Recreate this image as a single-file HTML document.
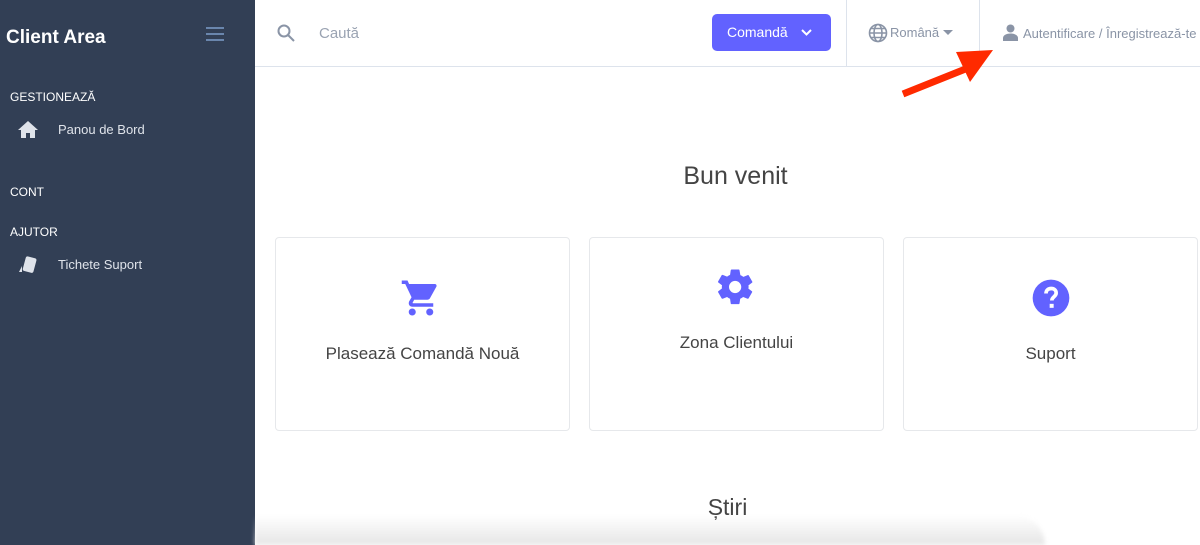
<!DOCTYPE html>
<html><head><meta charset="utf-8"><style>
*{box-sizing:border-box;margin:0;padding:0}
body{width:1200px;height:545px;overflow:hidden;font-family:"Liberation Sans",sans-serif;background:#fff;position:relative}
.sb{position:absolute;left:0;top:0;width:255px;height:545px;background:#323f55;color:#fff}
.sb h1{position:absolute;left:6px;top:27px;font-size:19px;font-weight:bold}
.ham{position:absolute;left:206px;top:27px;width:18px}
.ham i{display:block;height:2px;background:#6a86ad;margin-bottom:4px}
.sec{position:absolute;left:10px;font-size:12px;color:#fff}
.it{position:absolute;left:58px;font-size:13px;color:#dfe3ea}
.hd{position:absolute;left:255px;top:0;right:0;height:67px;border-bottom:1px solid #dde3ec}
.abs{position:absolute}
.card{position:absolute;top:237px;width:295px;height:194px;border:1px solid #e6e8eb;border-radius:4px;text-align:center;font-size:17px;color:#444}
</style></head><body>
<div class="sb">
<h1>Client Area</h1>
<div class="ham"><i></i><i></i><i></i></div>
<div class="sec" style="top:90px">GESTIONEAZĂ</div>
<svg class="abs" style="left:18px;top:121px" width="20" height="17" viewBox="0 0 20 17"><path d="M10 0L0 9h3v8h5v-5h4v5h5V9h3z" fill="#dfe3ea"/></svg>
<div class="it" style="top:122px">Panou de Bord</div>
<div class="sec" style="top:185px">CONT</div>
<div class="sec" style="top:225px">AJUTOR</div>
<svg class="abs" style="left:17px;top:256px" width="22" height="18" viewBox="0 0 22 18"><rect x="7" y="1" width="11" height="15" rx="2" transform="rotate(15 12 9)" fill="#dfe3ea"/><path d="M2 16l3-6v6z" fill="#dfe3ea"/></svg>
<div class="it" style="top:257px">Tichete Suport</div>
</div>
<div class="hd">
<svg class="abs" style="left:22px;top:24px" width="18" height="18" viewBox="0 0 18 18"><circle cx="7" cy="7" r="5.5" stroke="#8a94a6" stroke-width="2" fill="none"/><path d="M11 11l6 6" stroke="#8a94a6" stroke-width="2"/></svg>
<div class="abs" style="left:64px;top:25px;font-size:15px;color:#9aa3b2">Caută</div>
<div class="abs" style="left:457px;top:14px;width:119px;height:37px;background:#6262ff;border-radius:5px;color:#fff;font-size:14px;padding:10px 0 0 15px">Comandă<svg class="abs" style="left:89px;top:15px" width="11" height="7" viewBox="0 0 11 7"><path d="M1 1l4.5 4.5L10 1" stroke="#fff" stroke-width="2" fill="none"/></svg></div>
<div class="abs" style="left:591px;top:0;width:1px;height:66px;background:#dde3ec"></div>
<svg class="abs" style="left:613px;top:23px" width="20" height="20" viewBox="0 0 20 20" fill="none" stroke="#8a94a6" stroke-width="1.6"><circle cx="10" cy="10" r="8.5"/><ellipse cx="10" cy="10" rx="4" ry="8.5"/><path d="M1.5 10h17M3 5.5h14M3 14.5h14"/></svg>
<div class="abs" style="left:635px;top:25px;font-size:13px;color:#8a94a6">Română</div>
<svg class="abs" style="left:688px;top:30px" width="10" height="6"><path d="M0 0h10L5 5z" fill="#8a94a6"/></svg>
<div class="abs" style="left:724px;top:0;width:1px;height:66px;background:#dde3ec"></div>
<svg class="abs" style="left:748px;top:24px" width="15" height="17" viewBox="0 0 15 17"><circle cx="7.5" cy="4.5" r="4" fill="#8a94a6"/><path d="M0 17v-3c0-3 4-4.5 7.5-4.5S15 11 15 14v3z" fill="#8a94a6"/></svg>
<div class="abs" style="left:768px;top:26px;font-size:13px;color:#8a94a6;white-space:nowrap">Autentificare / Înregistrează-te</div>
</div>
<svg class="abs" style="left:898px;top:48px" width="100" height="50" viewBox="0 0 100 50"><path d="M5 46L70 20" stroke="#ff2a00" stroke-width="7"/><path d="M95 2L58 4l14 30z" fill="#ff2a00"/></svg>
<div class="abs" style="left:263px;width:945px;top:162px;text-align:center;font-size:25px;color:#444">Bun venit</div>
<div class="card" style="left:275px"><svg class="abs" style="left:124px;top:39px" width="42" height="42" viewBox="0 0 24 24"><path d="M7 18c-1.1 0-2 .9-2 2s.9 2 2 2 2-.9 2-2-.9-2-2-2zM1 2v2h2l3.6 7.6-1.4 2.4c-.1.3-.2.6-.2 1 0 1.1.9 2 2 2h12v-2H7.4c-.1 0-.2-.1-.2-.2v-.1l.9-1.7h7.4c.8 0 1.4-.4 1.700-1l3.6-6.5c.1-.2.1-.3.1-.5 0-.6-.4-1-1-1H5.2l-.9-2zM17 18c-1.1 0-2 .9-2 2s.9 2 2 2 2-.9 2-2-.9-2-2-2z" fill="#6262ff"/></svg><div style="margin-top:106px">Plasează Comandă Nouă</div></div>
<div class="card" style="left:589px"><svg class="abs" style="left:125px;top:28px" width="42" height="42" viewBox="0 0 24 24"><path d="M19.1 12.9c0-.3.1-.6.1-.9s0-.6-.1-.9l2.1-1.6c.2-.2.2-.4.1-.6l-2-3.5c-.1-.2-.4-.3-.6-.2l-2.5 1c-.5-.4-1.100-.7-1.700-1L14 2.4c0-.2-.2-.4-.5-.4h-4c-.2 0-.4.2-.5.4l-.4 2.7c-.6.2-1.100.6-1.700 1l-2.5-1c-.2-.1-.5 0-.6.2l-2 3.5c-.1.2-.1.5.1.6l2.1 1.6c0 .3-.1.6-.1.9s0 .6.1.9l-2.1 1.6c-.2.2-.2.4-.1.6l2 3.5c.1.2.4.3.6.2l2.5-1c.5.4 1.100.7 1.700 1l.4 2.7c0 .2.2.4.5.4h4c.2 0 .4-.2.5-.4l.4-2.7c.6-.2 1.100-.6 1.700-1l2.5 1c.2.1.5 0 .6-.2l2-3.5c.1-.2.1-.5-.1-.6zM11.5 15.5c-1.900 0-3.5-1.600-3.5-3.5s1.600-3.5 3.5-3.5 3.5 1.600 3.5 3.5-1.600 3.5-3.5 3.5z" fill="#6262ff"/></svg><div style="margin-top:95px">Zona Clientului</div></div>
<div class="card" style="left:903px"><svg class="abs" style="left:127px;top:40px" width="40" height="40" viewBox="0 0 24 24"><circle cx="12" cy="12" r="11" fill="#6262ff"/><path d="M9 9.3c0-1.800 1.300-3 3.100-3s3 1.100 3 2.700c0 2.200-2.600 2.300-2.600 4.500" stroke="#fff" stroke-width="2.2" fill="none"/><rect x="11.2" y="15.5" width="2.4" height="2.4" fill="#fff"/></svg><div style="margin-top:106px">Suport</div></div>
<div class="abs" style="left:255px;width:945px;top:494px;text-align:center;font-size:23px;color:#444">Știri</div>
<div class="abs" style="left:255px;top:515px;width:790px;height:30px;background:linear-gradient(#fff0,#e6e6e6);border-radius:0 60px 0 0;filter:blur(2px)"></div>
</body></html>
